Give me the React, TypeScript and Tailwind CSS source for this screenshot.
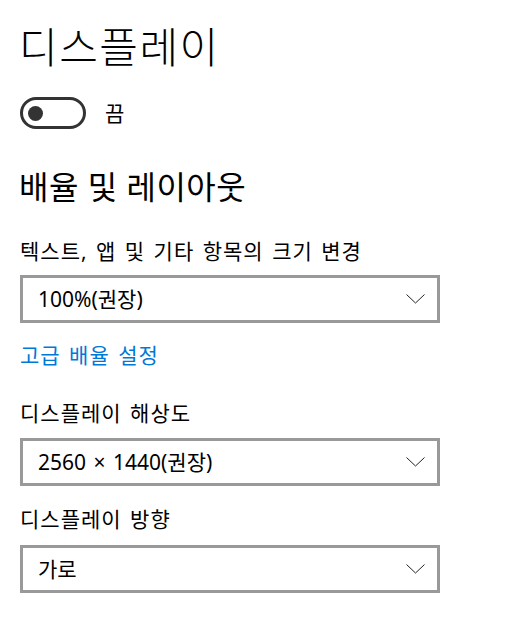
import React from "react";

const font = { fontFamily: '"Noto Sans", "Noto Sans CJK KR", sans-serif' };

function Chevron() {
  return (
    <svg width="19" height="10" viewBox="0 0 19 10" fill="none">
      <polyline points="0.5,0.5 9.5,9 18.5,0.5" stroke="#222" strokeWidth="1" />
    </svg>
  );
}

function Dropdown({ value, mt }: { value: string; mt: string }) {
  return (
    <div
      className={`${mt} w-[420px] h-[48px] border-[3px] border-[#999999] bg-white flex items-center justify-between pl-[15px] pr-[12px]`}
    >
      <span className="text-[21px] leading-[30px] text-black [word-spacing:2px]">{value}</span>
      <Chevron />
    </div>
  );
}

export default function App() {
  return (
    <div className="w-[506px] h-[630px] bg-white px-[20px] pt-[17px] flex flex-col items-start" style={font}>
      <div
        className="h-[56px] flex items-center text-[42px] font-light text-black leading-[56px] tracking-[1.5px] -ml-[1px]"
        style={{ fontFamily: '"Noto Sans CJK KR", sans-serif' }}
      >
        디스플레이
      </div>
      <div className="mt-[24px] h-[32px] flex items-center">
        <div className="w-[66px] h-[32px] rounded-full border-[3px] border-[#333333] flex items-center pl-[5px]">
          <div className="w-[15px] h-[15px] rounded-full bg-[#333333]" />
        </div>
        <span className="ml-[19px] text-[21px] leading-[30px] text-black">끔</span>
      </div>
      <div className="mt-[38px] h-[40px] flex items-center text-[32px] leading-[40px] text-black tracking-[0.5px] -ml-[1px]">
        배율 및 레이아웃
      </div>
      <div className="mt-[29px] h-[30px] flex items-center text-[21px] leading-[30px] text-black tracking-[1px] [word-spacing:2px]">
        텍스트, 앱 및 기타 항목의 크기 변경
      </div>
      <Dropdown mt="mt-[9px]" value="100%(권장)" />
      <div className="mt-[17px] h-[30px] flex items-center text-[21px] leading-[30px] text-[#0078d7] tracking-[1px] [word-spacing:2px]">
        고급 배율 설정
      </div>
      <div className="mt-[28px] h-[30px] flex items-center text-[21px] leading-[30px] text-black tracking-[1px] [word-spacing:2px]">
        디스플레이 해상도
      </div>
      <Dropdown mt="mt-[10px]" value="2560 × 1440(권장)" />
      <div className="mt-[18px] h-[30px] flex items-center text-[21px] leading-[30px] text-black tracking-[1px] [word-spacing:2px]">
        디스플레이 방향
      </div>
      <Dropdown mt="mt-[11px]" value="가로" />
    </div>
  );
}
